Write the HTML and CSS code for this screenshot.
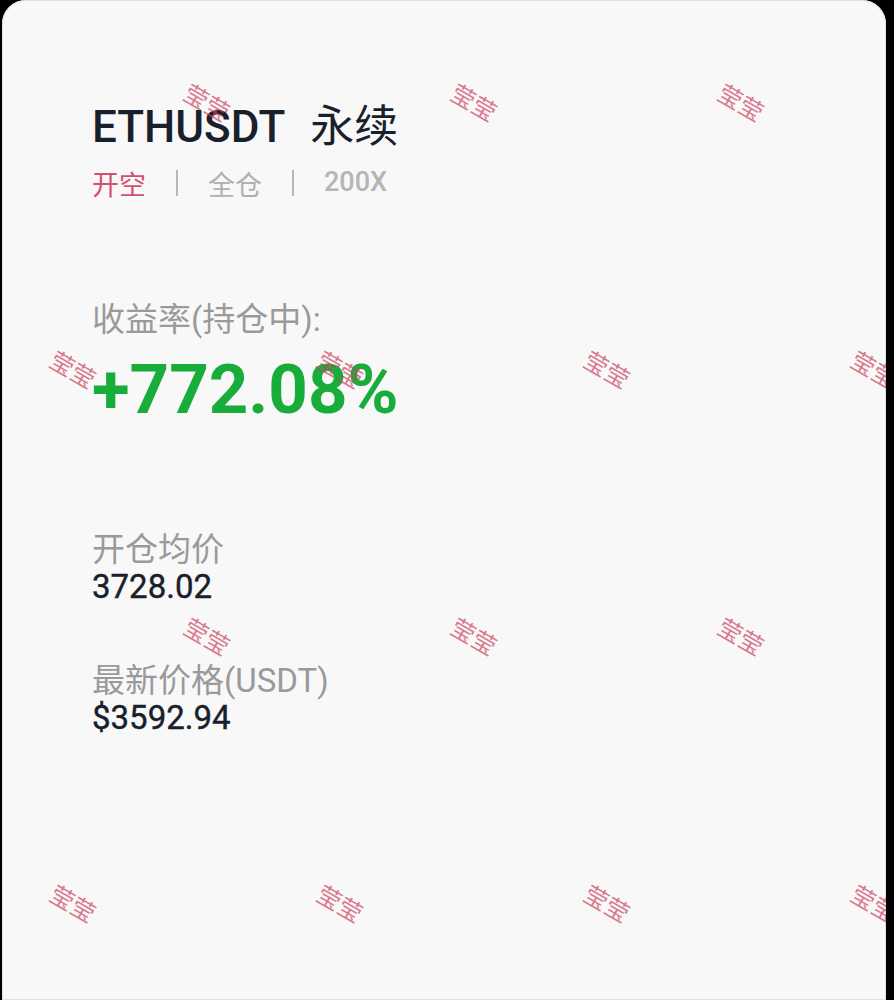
FILE: index.html
```html
<!DOCTYPE html>
<html lang="zh">
<head>
    <meta charset="UTF-8">
    <meta name="viewport" content="width=device-width, initial-scale=1.0">
    <title>ETHUSDT 永续</title>
    <link rel="stylesheet" href="styles.css">
</head>
<body>
    <div class="card">
        <h1 class="title">ETHUSDT<span class="title-cn">永续</span></h1>
        <div class="tags">
            <span class="tag-side">开空</span>
            <span class="tag-sep"></span>
            <span class="tag-mode">全仓</span>
            <span class="tag-sep"></span>
            <span class="tag-lev">200X</span>
        </div>

        <div class="roe-label">收益率(持仓中):</div>
        <div class="roe-value">+772.08%</div>

        <div class="field first">
            <div class="field-label">开仓均价</div>
            <div class="field-value">3728.02</div>
        </div>
        <div class="field">
            <div class="field-label">最新价格(USDT)</div>
            <div class="field-value">$3592.94</div>
        </div>

        <!-- 水印 -->
        <div class="watermarks">
            <div class="wm-row odd"><span>莹莹</span><span>莹莹</span><span>莹莹</span></div>
            <div class="wm-row even"><span>莹莹</span><span>莹莹</span><span>莹莹</span><span>莹莹</span></div>
            <div class="wm-row odd"><span>莹莹</span><span>莹莹</span><span>莹莹</span></div>
            <div class="wm-row even"><span>莹莹</span><span>莹莹</span><span>莹莹</span><span>莹莹</span></div>
        </div>
    </div>
</body>
</html>
```

FILE: styles.css
```css
html, body {
    margin: 0;
    padding: 0;
    background: #000;
}
body {
    font-family: Roboto, "Noto Sans CJK SC", sans-serif;
}
.card {
    position: relative;
    overflow: hidden;
    margin-left: 2px;
    width: 884px;
    min-height: 1000px;
    box-sizing: border-box;
    padding: 102px 0 0 90px;
    background: #f8f8f8;
    border-radius: 24px 24px 0 0;
    box-shadow: inset 0 0 0 1px #e2e2e2;
}
.title {
    margin: 0;
    font-size: 44px;
    line-height: 50px;
    font-weight: 500;
    color: #18212b;
}
.title-cn {
    margin-left: 25px;
    font-weight: 400;
}
.tags {
    display: flex;
    align-items: center;
    gap: 30px;
    margin-top: 16px;
    height: 36px;
    font-size: 27px;
    line-height: 36px;
}
.tag-side {
    color: #d4506f;
}
.tag-sep {
    width: 2px;
    height: 26px;
    margin-top: -6px;
    background: #b8b8b8;
}
.tag-mode {
    color: #b0b0b0;
}
.tag-lev {
    color: #b5b5b5;
    font-weight: 500;
    margin-top: -8px;
}
.roe-label {
    margin-top: 96px;
    font-size: 33px;
    line-height: 40px;
    color: #9a9a9a;
}
.roe-value {
    margin-top: 10px;
    font-size: 69px;
    line-height: 80px;
    font-weight: 700;
    color: #18ad3a;
}
.field {
    margin-top: 57px;
}
.field.first {
    margin-top: 101px;
}
.field-label {
    font-size: 33px;
    line-height: 37px;
    color: #9a9a9a;
}
.field-value {
    font-size: 33px;
    line-height: 37px;
    font-weight: 400;
    color: #18212b;
    -webkit-text-stroke: 0.4px #18212b;
}
/* 水印层 */
.watermarks {
    position: absolute;
    top: -32px;
    left: 0;
    right: 0;
    bottom: 0;
    pointer-events: none;
}
.wm-row {
    display: flex;
    height: 267px;
}
.wm-row.odd {
    padding-left: 72px;
}
.wm-row.even {
    margin-left: -62px;
}
.wm-row span {
    flex: 0 0 267px;
    display: flex;
    align-items: center;
    justify-content: center;
    font-size: 24px;
    color: rgba(204, 64, 94, 0.7);
    transform: rotate(30deg);
}
```
